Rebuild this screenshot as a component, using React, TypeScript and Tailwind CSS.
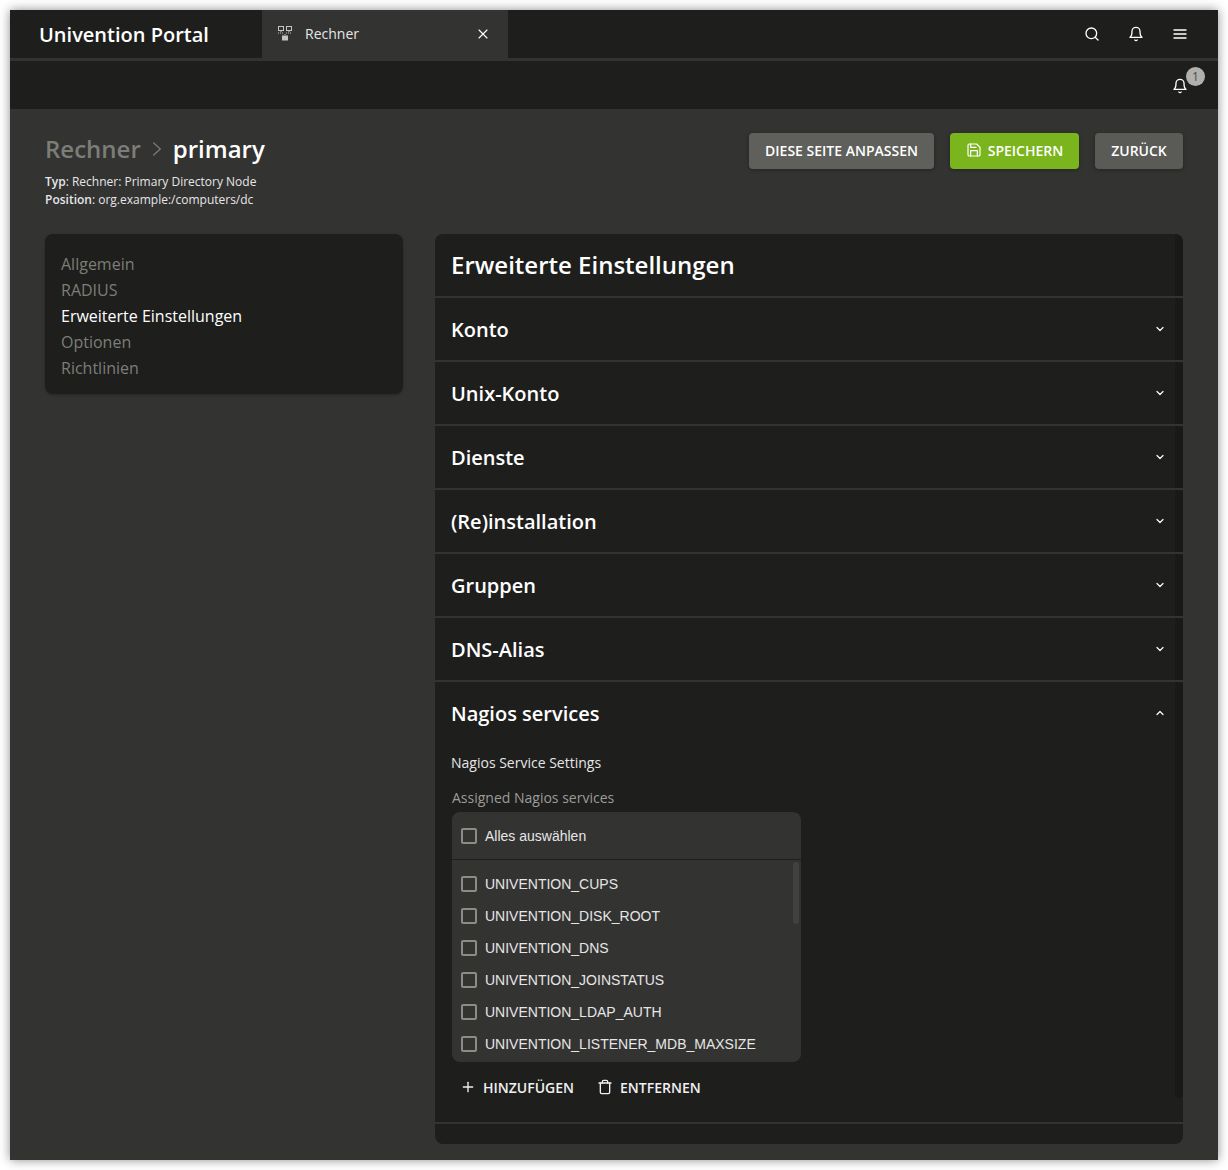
import React from 'react';

const sans = 'font-["Open_Sans",sans-serif]';

const Icon: React.FC<{ size: number; className?: string; strokeWidth?: number; children: React.ReactNode }> = ({
  size,
  className,
  strokeWidth = 2,
  children,
}) => (
  <svg
    width={size}
    height={size}
    viewBox="0 0 24 24"
    fill="none"
    stroke="currentColor"
    strokeWidth={strokeWidth}
    strokeLinecap="round"
    strokeLinejoin="round"
    className={className}
  >
    {children}
  </svg>
);

const BellIcon = () => (
  <Icon size={16}>
    <path d="M18 8A6 6 0 0 0 6 8c0 7-3 9-3 9h18s-3-2-3-9" />
    <path d="M13.73 21a2 2 0 0 1-3.46 0" />
  </Icon>
);

const Chevron: React.FC<{ up?: boolean }> = ({ up }) => (
  <Icon size={12} strokeWidth={2.4} className="-mt-[2px]">
    <polyline points={up ? '18 15 12 9 6 15' : '6 9 12 15 18 9'} />
  </Icon>
);

const Checkbox = () => <span className="block w-4 h-4 shrink-0 rounded-[2px] border-2 border-[#8c8c85]" />;

const sections = ['Konto', 'Unix-Konto', 'Dienste', '(Re)installation', 'Gruppen', 'DNS-Alias'];
const tabs = ['Allgemein', 'RADIUS', 'Erweiterte Einstellungen', 'Optionen', 'Richtlinien'];
const services = [
  'UNIVENTION_CUPS',
  'UNIVENTION_DISK_ROOT',
  'UNIVENTION_DNS',
  'UNIVENTION_JOINSTATUS',
  'UNIVENTION_LDAP_AUTH',
  'UNIVENTION_LISTENER_MDB_MAXSIZE',
];

const App: React.FC = () => {
  return (
    <div className={`bg-white w-[1228px] h-[1170px] pt-[10px] px-[10px] overflow-hidden ${sans}`}>
      <div className="w-[1208px] h-[1150px] bg-[#333332] text-white shadow-[0_0_10px_rgba(0,0,0,0.45)] overflow-hidden">
        {/* Header */}
        <header className="h-[48px] bg-[#1e1e1d] flex items-stretch">
          <div className="w-[252px] pl-[29px] pt-[2px] flex items-center text-[20px] font-semibold">Univention Portal</div>
          <div className="w-[246px] h-[51px] bg-[#333332] flex items-center pl-[16px] pr-[17px] pb-[4px] text-[14px] text-[#e6e6e6]">
            <svg width="15" height="15" viewBox="0 0 15 15" className="text-[#c4c4c0] shrink-0" fill="none" stroke="currentColor">
              <rect x="0.5" y="0.5" width="5" height="4" />
              <rect x="8.5" y="0.5" width="5" height="4" />
              <path d="M3 5v2M11 5v2M0 7h6M8 7h6M7 8v2" strokeDasharray="1 1" />
              <rect x="4.5" y="10" width="5" height="4" fill="currentColor" />
            </svg>
            <span className="ml-[12px]">Rechner</span>
            <span className="ml-auto text-white flex">
              <Icon size={16} strokeWidth={1.7}>
                <line x1="18" y1="6" x2="6" y2="18" />
                <line x1="6" y1="6" x2="18" y2="18" />
              </Icon>
            </span>
          </div>
          <div className="ml-auto flex items-center pr-[30px] gap-[28px]">
            <Icon size={16}>
              <circle cx="11" cy="11" r="8" />
              <line x1="21" y1="21" x2="16.65" y2="16.65" />
            </Icon>
            <BellIcon />
            <Icon size={16}>
              <line x1="3" y1="12" x2="21" y2="12" />
              <line x1="3" y1="6" x2="21" y2="6" />
              <line x1="3" y1="18" x2="21" y2="18" />
            </Icon>
          </div>
        </header>
        <div className="h-[3px] bg-[#333332]" />

        {/* Notification bar */}
        <div className="h-[48px] bg-[#1e1e1d] flex items-center justify-end pr-[30px]">
          <div className="relative flex mt-[1px]">
            <BellIcon />
            <span className="absolute left-[14px] top-[-11px] w-[19px] h-[19px] rounded-full bg-[#b0b0ac] text-[#4d4d4a] text-[12px] leading-[19px] text-center">
              1
            </span>
          </div>
        </div>

        <main className="pt-[24px] px-[35px]">
          {/* Page title + actions */}
          <div className="flex items-start justify-between h-[101px]">
            <div>
              <div className="flex items-center h-[32px] text-[24px] font-semibold">
                <span className="text-[#7d7d78]">Rechner</span>
                <span className="mx-[8px] text-[#7d7d78] flex">
                  <Icon size={16} strokeWidth={1.8}>
                    <polyline points="7 3 17 12 7 21" />
                  </Icon>
                </span>
                <span>primary</span>
              </div>
              <div className="mt-[8px] text-[12px] leading-[18px] text-[#e6e6e6]">
                <div>
                  <b className="font-semibold">Typ</b>: Rechner: Primary Directory Node
                </div>
                <div>
                  <b className="font-semibold">Position</b>: org.example:/computers/dc
                </div>
              </div>
            </div>
            <div className="flex gap-[16px] text-[14px] font-semibold">
              <button className="h-[36px] w-[185px] pb-[2px] rounded-[4px] bg-[#5f5f5b] shadow-[0_1px_4px_rgba(0,0,0,0.3)]">DIESE SEITE ANPASSEN</button>
              <button className="h-[36px] w-[129px] pb-[2px] rounded-[4px] bg-[#7ab51d] shadow-[0_1px_4px_rgba(0,0,0,0.3)] flex items-center justify-center gap-[6px]">
                <Icon size={16} strokeWidth={1.8}>
                  <path d="M19 21H5a2 2 0 0 1-2-2V5a2 2 0 0 1 2-2h11l5 5v11a2 2 0 0 1-2 2z" />
                  <polyline points="17 21 17 13 7 13 7 21" />
                  <polyline points="7 3 7 8 15 8" />
                </Icon>
                SPEICHERN
              </button>
              <button className="h-[36px] w-[88px] pb-[2px] rounded-[4px] bg-[#5a5a57] shadow-[0_1px_4px_rgba(0,0,0,0.3)]">ZURÜCK</button>
            </div>
          </div>

          <div className="flex items-start gap-[32px]">
            {/* Side navigation */}
            <nav className="w-[358px] h-[160px] rounded-[8px] bg-[#1e1e1d] px-[16px] pt-[17px] text-[16px] leading-[26px] text-[#7d7d78] shadow-[0_1px_3px_rgba(0,0,0,0.25)]">
              {tabs.map((tab) => (
                <div key={tab} className={tab === 'Erweiterte Einstellungen' ? 'text-white' : ''}>
                  {tab}
                </div>
              ))}
            </nav>

            {/* Sections */}
            <section className="relative w-[748px] h-[910px] rounded-[8px] bg-[#1e1e1d] overflow-hidden">
              <div className="absolute right-0 top-0 w-[8px] h-[864px] rounded-[4px] bg-[#191918]" />
              <h2 className="relative h-[62px] px-[16px] flex items-center text-[24px] font-semibold">Erweiterte Einstellungen</h2>
              {sections.map((name) => (
                <div key={name} className="relative h-[64px] border-t-2 border-[#333332] pl-[16px] pr-[17px] pt-[2px] flex items-center justify-between text-[20px] font-semibold">
                  {name}
                  <Chevron />
                </div>
              ))}
              <div className="relative h-[444px] border-t-2 border-b-2 border-[#333332] px-[16px]">
                <div className="h-[62px] pt-[2px] flex items-center justify-between pr-[1px] text-[20px] font-semibold">
                  Nagios services
                  <Chevron up />
                </div>
                <div className="mt-[8px] text-[14px] leading-[22px] text-[#e6e6e6]">Nagios Service Settings</div>
                <div className="mt-[13px] ml-[1px] text-[14px] leading-[22px] text-[#9c9c97]">Assigned Nagios services</div>
                <div className="relative mt-[3px] ml-[1px] w-[349px] h-[250px] rounded-[8px] bg-[#333332] font-['Liberation_Sans',sans-serif] text-[14px] text-[#e6e6e6] overflow-hidden">
                  <div className="h-[48px] flex items-center gap-[8px] pl-[9px] border-b border-[#1e1e1d]">
                    <Checkbox />
                    <span className="mt-[1px]">Alles auswählen</span>
                  </div>
                  <div className="pt-[8px]">
                    {services.map((service) => (
                      <div key={service} className="h-[32px] flex items-center gap-[8px] pl-[9px]">
                        <Checkbox />
                        {service}
                      </div>
                    ))}
                  </div>
                  <div className="absolute right-[2px] top-[50px] w-[6px] h-[62px] rounded-[3px] bg-[#414140]" />
                </div>
                <div className="mt-[9px] flex items-center h-[32px] text-[14px] font-semibold text-[#f0f0f0]">
                  <span className="ml-[9px] flex items-center gap-[7px]">
                    <Icon size={16}>
                      <line x1="12" y1="5" x2="12" y2="19" />
                      <line x1="5" y1="12" x2="19" y2="12" />
                    </Icon>
                    HINZUFÜGEN
                  </span>
                  <span className="ml-[23px] flex items-center gap-[7px]">
                    <Icon size={16}>
                      <polyline points="3 6 5 6 21 6" />
                      <path d="M19 6v14a2 2 0 0 1-2 2H7a2 2 0 0 1-2-2V6m3 0V4a2 2 0 0 1 2-2h4a2 2 0 0 1 2 2v2" />
                    </Icon>
                    ENTFERNEN
                  </span>
                </div>
              </div>
            </section>
          </div>
        </main>
      </div>
    </div>
  );
};

export default App;
